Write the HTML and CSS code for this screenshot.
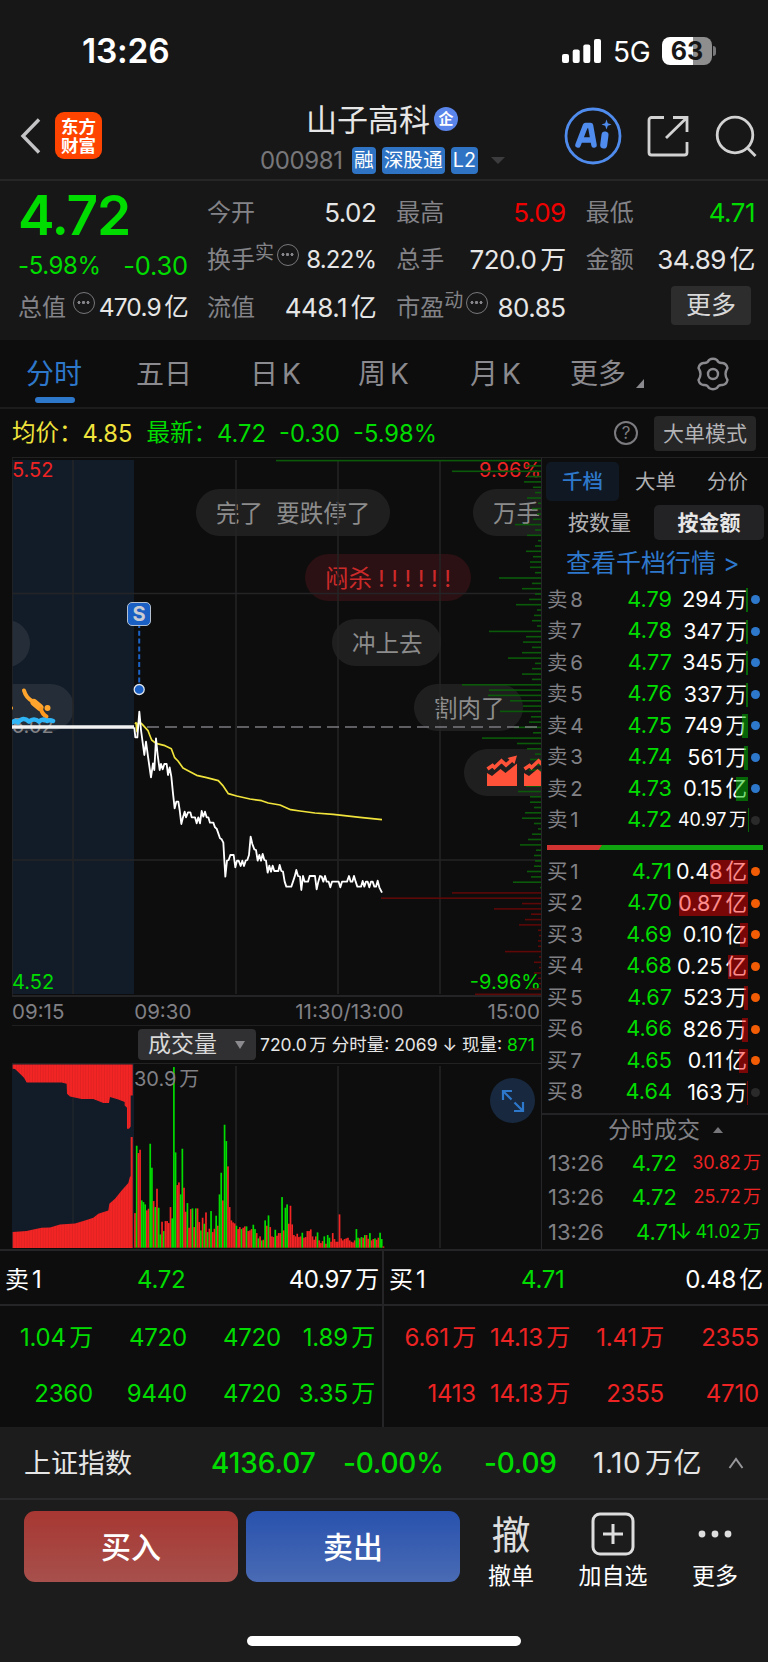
FILE: index.html
```html
<!DOCTYPE html>
<html lang="zh-CN">
<head>
    <meta charset="UTF-8">
    <meta name="viewport" content="width=device-width, initial-scale=1.0">
    <title>山子高科 000981</title>
    <link rel="stylesheet" href="styles.css">
</head>
<body>
    <div class="phone">

        <!-- Status bar -->
        <div class="status-bar">
            <span class="clock">13:26</span>
            <div class="status-right">
                <svg class="signal" width="39" height="25" viewBox="0 0 39 25" fill="#fff">
                    <rect x="0" y="15" width="7" height="9" rx="2"/>
                    <rect x="10.7" y="10.500" width="7" height="13.500" rx="2"/>
                    <rect x="21.300" y="5.500" width="7" height="18.500" rx="2"/>
                    <rect x="32" y="0" width="7" height="24" rx="2"/>
                </svg>
                <span class="network">5G</span>
                <span class="battery">63</span>
                <span class="battery-tip"></span>
            </div>
        </div>

        <!-- Header -->
        <header class="header">
            <div class="header-left">
                <svg width="21" height="36" viewBox="0 0 21 36" fill="none" stroke="#c4c4c6" stroke-width="3.4"><path d="M19 1.500 3 18l16 16.500"/></svg>
                <div class="logo">东方<br>财富</div>
            </div>
            <div class="header-title">
                <div class="stock-name">山子高科<span class="badge">企</span></div>
                <div class="stock-code">
                    <span class="code">000981</span>
                    <span class="tag">融</span>
                    <span class="tag">深股通</span>
                    <span class="tag">L2</span>
                    <span class="caret"></span>
                </div>
            </div>
            <div class="header-right">
                <svg width="58" height="58" viewBox="0 0 58 58">
                    <circle cx="29" cy="29" r="27" fill="none" stroke="#4f8cee" stroke-width="2.800"/>
                    <path d="M14 38 21.500 18.500h5L30 38M18 33h10" fill="none" stroke="#4f8cee" stroke-width="5.500" stroke-linejoin="round" stroke-linecap="round"/>
                    <path d="M41 28l-1.300 10" stroke="#4f8cee" stroke-width="7" stroke-linecap="round"/>
                    <path d="M42.500 12.500l1.300 3.700 3.700 1.300-3.700 1.300-1.300 3.700-1.300-3.700-3.700-1.300 3.700-1.300z" fill="#4f8cee"/>
                </svg>
                <svg class="share" width="42" height="42" viewBox="0 0 42 42" fill="none" stroke="#d2d2d2" stroke-width="2.800">
                    <path d="M17 2.500H4.500a2.500 2.500 0 0 0-2.500 2.500v32.500A2.500 2.500 0 0 0 4.500 40h33a2.500 2.500 0 0 0 2.500-2.500V27M26 2.500h14V17M40 2.500 19 23"/>
                </svg>
                <svg class="search" width="43" height="43" viewBox="0 0 43 43" fill="none" stroke="#d2d2d2" stroke-width="2.800">
                    <circle cx="20" cy="20" r="17.800"/><path d="M32.500 33 40.500 41"/>
                </svg>
            </div>
        </header>

        <!-- Quote panel -->
        <section class="quote">
            <div class="quote-main">
                <div class="last-price">4.72</div>
                <div class="change-row"><span>-5.98%</span><span class="change">-0.30</span></div>
                <div class="cell"><span>总值<i class="more-dots"></i></span><b class="n">470.9亿</b></div>
            </div>
            <div class="quote-grid">
                <div class="cell"><span>今开</span><b>5.02</b></div>
                <div class="cell"><span>最高</span><b class="up">5.09</b></div>
                <div class="cell"><span>最低</span><b class="down">4.71</b></div>
                <div class="cell"><span>换手<sup>实</sup><i class="more-dots"></i></span><b class="small">8.22%</b></div>
                <div class="cell"><span>总手</span><b class="n">720.0万</b></div>
                <div class="cell"><span>金额</span><b class="n">34.89亿</b></div>
                <div class="cell"><span>流值</span><b class="n">448.1亿</b></div>
                <div class="cell"><span>市盈<sup>动</sup><i class="more-dots"></i></span><b>80.85</b></div>
                <div class="cell cell-more"><button class="btn-more">更多</button></div>
            </div>
        </section>

        <!-- Period tabs -->
        <nav class="tabs">
            <a class="active">分时</a>
            <a>五日</a>
            <a class="n">日K</a>
            <a class="n">周K</a>
            <a class="n">月K</a>
            <a class="tab-more">更多</a>
            <svg width="34" height="36" viewBox="0 0 34 36" fill="none" stroke="#8a8a8f" stroke-width="2.400" stroke-linejoin="round">
                <path d="M13 4Q17 1.500 21 4Q22.500 7.500 26.500 7Q30.500 7.500 31.500 12Q29.500 15 29.500 18Q29.500 21 31.500 24Q30.500 28.500 26.500 29Q22.500 28.500 21 32Q17 34.500 13 32Q11.500 28.500 7.500 29Q3.500 28.500 2.500 24Q4.500 21 4.500 18Q4.500 15 2.500 12Q3.500 7.500 7.500 7Q11.500 7.500 13 4Z"/>
                <circle cx="17" cy="18" r="5"/>
            </svg>
        </nav>

        <div class="info-row">
            <span class="avg">均价：</span><span class="avg num-a">4.85</span>
            <span class="down">最新：</span><span class="down num-b">4.72</span>
            <span class="down num-c">-0.30</span>
            <span class="down num-d">-5.98%</span>
            <span class="help">?</span>
            <button class="btn-mode">大单模式</button>
        </div>

        <div class="main">
            <!-- Intraday chart -->
            <div class="chart-col">
                <div class="price-chart">
                    <span class="axis axis-top">5.52</span>
                    <span class="axis axis-mid">5.02</span>
                    <span class="axis axis-bottom">4.52</span>
                    <span class="axis axis-pct-top">9.96%</span>
                    <span class="axis axis-pct-bottom">-9.96%</span>

                    <span class="bubble b1">完了&nbsp; 要跌停了</span>
                    <span class="bubble b2">万手</span>
                    <span class="bubble b3 hot">闷杀<em>!!!!!!</em></span>
                    <span class="bubble b4">冲上去</span>
                    <span class="bubble b5">割肉了</span>
                    <span class="bubble b6"></span>
                    <span class="bubble b7"></span>
                    <span class="bubble b8"></span>

                    <svg class="price-svg" width="530" height="540" viewBox="0 0 530 540">
                        <g stroke="#242426" stroke-width="1.500">
                            <path d="M0 0V538M61 2V536M224 2V536M326 2V536M428 2V536M0 135.500H529M0 402H529"/>
                            <path d="M0 538H529" stroke-width="2"/>
                        </g>
                        <g id="depth"></g>
                        <!-- chart-up icons -->
                        <g fill="#ff5238">
                            <path d="M475 328V315l5 3 8.500-7 5 4 11.500-9.500V328z"/>
                            <path d="M475.500 311l5-3.500 2 2 7-6.500 4.500 4 7-6" fill="none" stroke="#ff5238" stroke-width="3.600"/>
                            <path d="M495.500 300l9.500-2.500-2.500 8.500z"/>
                            <path d="M512 328V315l5 3 8.500-7 5 4 11.500-9.500V328z"/>
                            <path d="M512.500 311l5-3.500 2 2 7-6.500 4.500 4 7-6" fill="none" stroke="#ff5238" stroke-width="3.600"/>
                        </g>
                        <path d="M129 269H529" stroke="#7b7b80" stroke-width="1.600" stroke-dasharray="12 6" stroke-dashoffset="-6"/>
                        <path d="M0 269H122" stroke="#f2f2f2" stroke-width="3.600"/>
                        <!-- diver -->
                        <g fill="none" stroke-linecap="round" stroke-linejoin="round">
                            <path d="M12 232.500q2 7.500 9 11" stroke="#ffa52e" stroke-width="4"/>
                            <path d="M22 244.500l6 5" stroke="#ffa52e" stroke-width="7"/>
                            <path d="M29 251q1 5 5.500 7.500" stroke="#ff9a1f" stroke-width="4"/>
                            <circle cx="35.500" cy="250" r="3" fill="#ffa52e"/>
                            <circle cx="-1" cy="250" r="2" fill="#ffa52e"/>
                            <path d="M0 264.500q3-3 6 0 5-6.500 11-1 5-4 10 0 4-3.500 8-.5 3-1.500 6 0" stroke="#2fb4f5" stroke-width="4.500"/>
                        </g>
                        <!-- sell marker -->
                        <path d="M127.200 165V226" stroke="#1c63c8" stroke-width="2" stroke-dasharray="5 2.800"/>
                        <circle cx="127.200" cy="231.500" r="5" fill="#1a5fc4" stroke="#dfe6ee" stroke-width="1.300"/>
                        <g transform="translate(-12 222) scale(.33333)" fill="none" stroke-linejoin="round">
                            <polyline stroke="#f0e33c" stroke-width="5" points="405,132 408,128 411,155 414,130 424,130 433,140 444,152 449,165 455,180 468,190 495,197 514,206 524,233 534,243 549,264 570,275 590,286 620,293 655,302 668,316 685,341 710,348 750,357 785,362 805,369 840,375 872,389 900,393 945,399 1000,403 1080,412 1146,419"/>
                            <polyline stroke="#fff" stroke-width="5.500" points="403,142 406,172 412,172 418,95 423,150 433,225 438,185 444,230 453,292 459,250 463,270 468,175 473,225 479,270 483,252 488,268 493,252 500,252 504,285 509,262 514,290 519,340 524,385 529,365 535,365 539,390 544,432 549,412 554,395 558,412 564,397 571,397 575,412 585,412 590,430 595,412 600,430 605,393 610,410 615,395 620,412 625,412 630,428 640,428 645,442 650,446 655,460 660,475 665,478 670,488 673,540 676,590 681,542 686,540 691,525 701,525 706,562 711,542 716,542 722,558 727,542 732,558 737,542 742,540 747,525 752,470 757,492 763,508 768,510 773,542 778,525 783,542 788,522 793,540 798,542 803,578 808,557 813,575 818,557 823,573 835,573 839,555 844,573 849,575 854,605 859,620 874,620 879,605 884,590 889,570 894,588 900,590 904,630 909,588 914,605 924,605 929,588 945,588 950,628 955,605 960,588 965,590 970,605 975,588 980,605 986,605 991,622 996,605 1016,605 1021,622 1026,605 1041,605 1047,588 1052,605 1057,605 1062,588 1067,605 1072,620 1083,620 1088,603 1093,620 1098,605 1103,605 1108,622 1113,605 1118,605 1123,620 1128,620 1133,602 1138,622 1146,638"/>
                        </g>
                    </svg>
                    <span class="sell-mark">S</span>
                </div>
                <div class="time-axis">
                    <span>09:15</span><span class="t2">09:30</span><span class="t3">11:30/13:00</span><span>15:00</span>
                </div>
                <div class="vol-head">
                    <button class="vol-select">成交量<i></i></button>
                    <span class="vol-text n">720.0万 分时量: 2069 ↓ 现量: <b class="down">871</b></span>
                </div>
                <div class="vol-chart">
                    <svg width="530" height="185" viewBox="0 0 530 185">
                        <defs>
                            <pattern id="stripe" width="8" height="30" patternUnits="userSpaceOnUse">
                                <rect width="8" height="30" fill="#f32424"/>
                                <rect width="1.500" height="30" fill="#d22020"/>
                            </pattern>
                        </defs>
                        <path d="M0 0V184M224 2V184M326 2V184M428 2V184" stroke="#242426" stroke-width="1.500"/>
                        <rect x="0" y="0" width="122" height="184" fill="#121c28"/>
                        <path d="M61 2V184" stroke="#20252a" stroke-width="1.500"/>
                        <g transform="translate(-12 -73.600) scale(.33333)">
                            <path fill="url(#stripe)" d="M38 222H398V315H392V408L387 415H381V352L374 345V335L355 327L330 320L327 338H310L280 326H245L210 318L201 310L200 280L185 276H140L80 276L72 262L60 250L45 236L38 235Z"/>
                            <path fill="url(#stripe)" d="M38 725L80 722L100 717L125 712L150 711L180 702L225 699L255 690L280 682L295 670L325 660L328 640L345 625L365 600L385 578L390 558H392V440H398V773H38Z"/>
                            <g id="volume"></g>
                        </g>
                    </svg>
                    <span class="vol-max n">30.9万</span>
                    <span class="expand">
                        <svg width="24" height="24" viewBox="0 0 24 24" fill="none" stroke="#2e78cc" stroke-width="2.200"><path d="M2 11V2h9M2.500 2.500l8 8M22 13v9h-9M21.500 21.500l-8-8"/></svg>
                    </span>
                </div>
            </div>

            <!-- Order book -->
            <aside class="book">
                <div class="book-tabs"><a class="active">千档</a><a>大单</a><a>分价</a></div>
                <div class="book-mode"><a>按数量</a><a class="active">按金额</a></div>
                <div class="book-link">查看千档行情 &gt;</div>
                <div class="levels" id="sells"></div>
                <div class="ratio"><i></i></div>
                <div class="levels" id="buys"></div>
                <div class="ticks-title">分时成交<i></i></div>
                <div class="ticks">
                    <div class="tick"><span>13:26</span><b>4.72</b><i></i><em class="up n">30.82万</em></div>
                    <div class="tick"><span>13:26</span><b>4.72</b><i></i><em class="up n">25.72万</em></div>
                    <div class="tick"><span>13:26</span><b>4.71</b><i>↓</i><em class="down n">41.02万</em></div>
                </div>
            </aside>
        </div>

        <!-- Level 2 queues -->
        <section class="queues">
            <div class="queue">
                <div class="queue-head"><span class="n">卖1</span><b>4.72</b><span class="n">40.97万</span></div>
                <div class="queue-grid down">
                    <span class="n">1.04万</span><span>4720</span><span>4720</span><span class="n">1.89万</span>
                    <span>2360</span><span>9440</span><span>4720</span><span class="n">3.35万</span>
                </div>
            </div>
            <div class="queue">
                <div class="queue-head"><span class="n">买1</span><b>4.71</b><span class="n">0.48亿</span></div>
                <div class="queue-grid up">
                    <span class="n">6.61万</span><span class="n">14.13万</span><span class="n">1.41万</span><span>2355</span>
                    <span>1413</span><span class="n">14.13万</span><span>2355</span><span>4710</span>
                </div>
            </div>
        </section>

        <!-- Index strip -->
        <div class="index-bar">
            <span class="index-name">上证指数</span>
            <b class="i1">4136.07</b><b class="i2">-0.00%</b><b class="i3">-0.09</b>
            <span class="index-amount n">1.10万亿</span>
            <svg width="16" height="14" viewBox="0 0 16 14" fill="none" stroke="#98989c" stroke-width="2"><path d="M1.500 12 8 3l6.500 9"/></svg>
        </div>

        <!-- Bottom actions -->
        <footer class="footer">
            <button class="trade buy">买入</button>
            <button class="trade sell">卖出</button>
            <div class="action"><span class="glyph">撤</span>撤单</div>
            <div class="action wide">
                <svg width="44" height="44" viewBox="0 0 44 44" fill="none" stroke="#dedede" stroke-width="3"><rect x="2" y="2" width="40" height="40" rx="7"/><path d="M22 12v20M12 22h20"/></svg>
                加自选
            </div>
            <div class="action">
                <svg width="44" height="44" viewBox="0 0 44 44" fill="#dedede"><circle cx="9" cy="22" r="3.400"/><circle cx="22" cy="22" r="3.400"/><circle cx="35" cy="22" r="3.400"/></svg>
                更多
            </div>
        </footer>
        <div class="home"></div>
    </div>

    <script>
        // level, price, amount, bar width, dot
        const sells = [
            [8, "4.79", "294万", 2, "blue"], [7, "4.78", "347万", 2, "blue"],
            [6, "4.77", "345万", 2, "blue"], [5, "4.76", "337万", 2, "blue"],
            [4, "4.75", "749万", 6, "blue"], [3, "4.74", "561万", 4, "blue"],
            [2, "4.73", "0.15亿", 12, "blue"], [1, "4.72", "40.97万", 0.5, "off"]
        ];
        const buys = [
            [1, "4.71", "0.48亿", 38.5, "orange"], [2, "4.70", "0.87亿", 69, "orange"],
            [3, "4.69", "0.10亿", 8, "orange"], [4, "4.68", "0.25亿", 20, "orange"],
            [5, "4.67", "523万", 4, "orange"], [6, "4.66", "826万", 6, "orange"],
            [7, "4.65", "0.11亿", 9, "orange"], [8, "4.64", "163万", 1, "off"]
        ];

        function drawLevels(id, label, rows) {
            document.getElementById(id).innerHTML = rows.map(r => `
                <div class="level">
                    <span class="n">${label}${r[0]}</span>
                    <b>${r[1]}</b>
                    <em class="n ${r[2].length > 5 ? "long" : ""}">${r[2]}<i style="width:${r[3]}px"></i></em>
                    <u class="${r[4]}"></u>
                </div>`).join("");
        }
        drawLevels("sells", "卖", sells);
        drawLevels("buys", "买", buys);

        // resting orders by price, drawn from the right edge
        const asks = [265, 15, 89, 14, 17, 8, 6, 14, 3, 9, 4, 8, 26, 6, 14, 3, 6, 15, 8, 11, 11, 6, 42, 9, 19, 6, 12, 25, 4, 7, 9, 4, 52, 15, 18, 9, 19, 33, 6, 9, 19, 9, 79, 52, 53, 31, 18, 41, 10, 12, 27, 8, 59, 24, 14,
            6, 11, 9, 12, 8, 8, 15, 23, 11, 11, 7, 16, 19, 7, 3, 9, 13, 21, 5, 7, 6, 7, 14, 10, 28, 1];
        const bids = [89, 160, 19, 47, 10, 16, 22, 3, 2, 3, 3, 36, 2, 7, 2, 7, 3, 2, 12, 66];
        let depth = "";
        asks.concat(bids).forEach((w, i) => {
            const color = i < asks.length ? "#0a5a0a" : "#5e0808";
            depth += `<rect x="${529 - w}" y="${(1.8 + i * 5.337).toFixed(1)}" width="${w}" height="1.6" fill="${color}"/>`;
        });
        document.getElementById("depth").innerHTML = depth;

        // minute volume, g = falling, r = rising
        const volume = "r104 g306 r284 r294 g142 g137 g130 r112 r117 g312 g240 r140 g122 r177 g120 g40 r78 g50 r80 r80 r74 r122 g88 g542 g286 r188 r196 g160 g297 r180 r108 g134 r60 r116 g118 r62 g118 r118 r77 g52 r90 g72 r106 g47 r57 g110 r47 r57 g96 r66 g160 g225 r142 g369 g320 r244 r122 r82 r76 r73 g66 r56 r62 g56 r60 r64 g64 r50 r52 r56 g69 g56 r44 g28 r34 g22 r24 g82 r66 g97 r62 r34 r32 g54 r36 r44 r44 g152 r52 g120 g130 r72 r126 r70 r38 r34 r42 r32 r34 g45 r30 r32 r50 r50 r55 r34 r24 r34 g46 r22 r14 r20 g34 r12 g38 g30 r18 r44 r26 r18 r18 r100 r28 r22 r26 r28 r30 r22 r18 r16 r22 g56 g30 r28 g32 r30 g38 r38 r27 g44 r22 r26 g28 r24 r30 g45 g26 r4";
        document.getElementById("volume").innerHTML = volume.split(" ").map((v, i) => {
            const h = Number(v.slice(1));
            return `<rect x="${(402.5 + i * 5.07).toFixed(1)}" y="${772 - h}" width="5.1" height="${h}" fill="${v[0] === "g" ? "#00dc00" : "#f32424"}"/>`;
        }).join("");

        // small gap between digits and Chinese characters
        document.querySelectorAll(".n").forEach(el => {
            el.innerHTML = el.innerHTML
                .replace(/(\d)([万亿])/g, '$1<span class="gap">$2</span>')
                .replace(/([卖买日周月])([\dK])/g, '$1<span class="gap">$2</span>');
        });
    </script>
</body>
</html>
```
FILE: styles.css
```css
* {
    box-sizing: border-box;
}
body {
    margin: 0;
    background: #fff;
    font-family: Inter, "Noto Sans CJK SC", sans-serif;
    font-size: 24px;
    line-height: 1;
    color: #e6e6e6;
}
b, em, i, u {
    font-weight: 400;
    font-style: normal;
    text-decoration: none;
}
button {
    font-family: inherit;
    line-height: 1;
    border: none;
    padding: 0;
    color: #d8d8d8;
}
svg {
    display: block;
    flex: none;
}
.phone {
    width: 768px;
    height: 1662px;
    background: #0d0d0d;
    overflow: hidden;
    white-space: nowrap;
}
.gap {
    margin-left: .14em;
}
.up {
    color: #ee2323;
}
.down {
    color: #00dc00;
}

/* status bar */
.status-bar {
    height: 100px;
    padding: 2px 52px 0 82px;
    display: flex;
    align-items: center;
    justify-content: space-between;
    background: #171717;
    color: #fff;
}
.clock {
    font-size: 33.500px;
    font-weight: 600;
    letter-spacing: -0.2px;
    padding-top: 2px;
}
.status-right {
    display: flex;
    align-items: center;
}
.network {
    font-size: 28px;
    margin-left: 12px;
    width: 49px;
    letter-spacing: -0.3px;
    padding-top: 2px;
}
.battery {
    width: 50px;
    height: 28px;
    border-radius: 8px;
    background: linear-gradient(to right, #fff 63%, #8e8e8e 63%);
    color: #171717;
    font-size: 25px;
    font-weight: 700;
    line-height: 28px;
    text-align: center;
}
.battery-tip {
    width: 3px;
    height: 10px;
    margin-left: 1px;
    border-radius: 0 3px 3px 0;
    background: #77777a;
}

/* header */
.header {
    height: 81px;
    display: grid;
    grid-template-columns: 260px 1fr 204px;
    background: #171717;
    border-bottom: 2px solid #262626;
}
.header-left {
    display: flex;
    align-items: center;
    height: 71px;
    padding-left: 20px;
}
.logo {
    width: 47px;
    height: 47px;
    margin-left: 14px;
    border-radius: 9px;
    background: #ff4400;
    color: #fff;
    font-size: 17.500px;
    font-weight: 700;
    line-height: 19px;
    padding-top: 5px;
    text-align: center;
}
.stock-name {
    height: 38px;
    padding-left: 46px;
    font-size: 31px;
    display: flex;
    align-items: center;
}
.badge {
    width: 24px;
    height: 24px;
    border-radius: 50%;
    background: #5a85ea;
    color: #fff;
    font-size: 15px;
    font-weight: 700;
    line-height: 23px;
    text-align: center;
    margin-left: 4px;
}
.stock-code {
    height: 45px;
    display: flex;
    align-items: center;
    gap: 6px;
}
.code {
    color: #77777b;
    font-size: 24px;
    width: 86px;
    letter-spacing: -0.4px;
}
.tag {
    height: 27px;
    padding: 0 2px;
    border-radius: 4px;
    background: #2f74c4;
    color: #fff;
    font-size: 19.700px;
    line-height: 26px;
}
.caret {
    margin-left: 7px;
    border: 7px solid transparent;
    border-top-color: #3c3c3e;
    border-bottom: none;
}
.header-right {
    display: flex;
    align-items: center;
    height: 72px;
}
.share {
    margin-left: 25px;
}
.search {
    margin-left: 26px;
}

/* quote panel */
.quote {
    height: 159px;
    display: flex;
    padding: 8px 13px 0 18px;
    background: #171717;
}
.quote-main {
    width: 170px;
    color: #00dc00;
}
.last-price {
    height: 52px;
    padding-top: 1px;
    font-size: 55px;
    font-weight: 600;
    line-height: 50px;
    letter-spacing: -1.300px;
}
.change-row {
    display: flex;
    justify-content: space-between;
    align-items: center;
    height: 43px;
    font-size: 24px;
    letter-spacing: -0.4px;
    padding-top: 6px;
}
.change {
    font-size: 25.500px;
    letter-spacing: -0.2px;
}
.quote-grid {
    flex: 1;
    margin-left: 19px;
    display: grid;
    grid-template-columns: repeat(3, 1fr);
    grid-template-rows: repeat(3, 47.500px);
    column-gap: 20px;
}
.cell {
    display: flex;
    align-items: center;
    justify-content: space-between;
    height: 47.500px;
    color: #838388;
}
.cell > span {
    display: flex;
    align-items: center;
}
.cell b {
    color: #e6e6e6;
    font-size: 26px;
    letter-spacing: -0.5px;
}
.cell b.small {
    font-size: 24px;
    letter-spacing: -0.8px;
}
.cell b.up {
    color: #f00000;
}
.cell b.down {
    color: #00dc00;
}
.cell sup {
    font-size: 19px;
    line-height: 1;
    align-self: flex-start;
    margin-top: -5px;
}
.more-dots {
    width: 22px;
    height: 22px;
    margin: -10px 0 0 3px;
    border: 1.500px solid #77777b;
    border-radius: 50%;
    background:
        radial-gradient(circle at 5px 9.500px, #85858a 1.300px, transparent 1.800px),
        radial-gradient(circle at 9.500px 9.500px, #85858a 1.300px, transparent 1.800px),
        radial-gradient(circle at 14px 9.500px, #85858a 1.300px, transparent 1.800px);
}
.quote-main .cell {
    height: 47px;
}
.quote-main .more-dots {
    margin-left: 7px;
}
.quote-main .cell b {
    font-size: 24.500px;
    letter-spacing: -0.8px;
}
.cell-more {
    justify-content: flex-end;
}
.btn-more {
    width: 80px;
    height: 39px;
    margin: -4px 4px 0 0;
    border-radius: 4px;
    background: #2d2d2e;
    font-size: 25px;
}

/* period tabs */
.tabs {
    height: 69px;
    display: flex;
    align-items: center;
    padding-left: 26px;
    border-bottom: 2px solid #1c1c1c;
    color: #8a8a8f;
    font-size: 28px;
}
.tabs a {
    width: 110px;
    height: 67px;
    line-height: 68px;
}
.tabs .active {
    color: #2e78cc;
    position: relative;
}
.tabs .active::after {
    content: "";
    position: absolute;
    left: 9px;
    bottom: 4px;
    width: 40px;
    height: 6px;
    border-radius: 3px;
    background: #2e78cc;
}
.tabs a:nth-child(2) {
    width: 114px;
}
.tabs a:nth-child(3) {
    width: 108px;
}
.tabs a:nth-child(4) {
    width: 112px;
}
.tabs a:nth-child(5) {
    width: 100px;
}
.tabs .tab-more {
    width: 126px;
    display: flex;
}
.tab-more::after {
    content: "";
    width: 8px;
    height: 9px;
    margin: 39px 0 0 10px;
    background: #8a8a8f;
    clip-path: polygon(100% 0, 100% 100%, 0 100%);
}

.info-row {
    height: 48px;
    display: flex;
    align-items: center;
    padding: 0 12px;
    font-size: 23.500px;
}
.avg {
    color: #f0e33c;
}
.num-a {
    width: 64px;
}
.num-b {
    width: 62px;
}
.num-c {
    width: 74px;
}
.num-a, .num-b, .num-c, .num-d {
    font-size: 23.700px;
    padding-top: 1px;
}
.help {
    width: 24px;
    height: 24px;
    margin-left: auto;
    border: 2px solid #7c7c80;
    border-radius: 50%;
    color: #7c7c80;
    font-size: 17px;
    line-height: 20px;
    text-align: center;
}
.btn-mode {
    width: 102px;
    height: 35px;
    margin-left: 16px;
    border-radius: 4px;
    background: #262627;
    color: #b4b4b6;
    font-size: 21px;
}

/* chart and order book */
.main {
    display: flex;
    height: 794px;
    padding-left: 12px;
    border-bottom: 2px solid #252527;
}
.chart-col {
    flex: none;
    width: 530px;
    border-top: 1px solid #222;
    border-right: 1px solid #262628;
}
.price-chart {
    position: relative;
    height: 540px;
    overflow: hidden;
    background: linear-gradient(#121c28, #121c28) 0 2px / 122px 534px no-repeat;
}
.price-svg {
    position: absolute;
    left: 0;
    top: 0;
}
.axis {
    position: absolute;
    font-size: 20px;
    color: #808085;
}
.axis-top {
    left: 0;
    top: 2px;
    color: #ee2323;
}
.axis-mid {
    left: 0;
    top: 258px;
}
.axis-bottom {
    left: 0;
    top: 514px;
    color: #00dc00;
}
.axis-pct-top {
    right: 0;
    top: 2px;
    color: #ee2323;
}
.axis-pct-bottom {
    right: 0;
    top: 514px;
    color: #00dc00;
}
.bubble {
    position: absolute;
    height: 47px;
    border-radius: 24px;
    background: rgba(255, 255, 255, 0.08);
    color: #8c8c8c;
    font-size: 23.500px;
    line-height: 49px;
    padding-left: 20px;
}
.b1 {
    left: 184px;
    top: 31px;
    width: 194px;
}
.b2 {
    left: 461px;
    top: 31px;
    width: 120px;
}
.b3 {
    left: 293px;
    top: 96px;
    width: 166px;
}
.b4 {
    left: 320px;
    top: 161px;
    width: 109px;
}
.b5 {
    left: 402px;
    top: 226px;
    width: 109px;
}
.b6 {
    left: -60px;
    top: 162px;
    width: 78px;
}
.b7 {
    left: -60px;
    top: 226px;
    width: 122px;
}
.b8 {
    left: 452px;
    top: 291px;
    width: 140px;
}
.hot {
    background: #2b1113;
    color: #cc2a2a;
}
.hot em {
    letter-spacing: 6.500px;
    margin-left: 6px;
}
.sell-mark {
    position: absolute;
    left: 115px;
    top: 144px;
    width: 24px;
    height: 24px;
    border: 1.500px solid #b4c0d0;
    border-radius: 5px;
    background: #1a5fc4;
    color: #c8ccd2;
    font-size: 20px;
    font-weight: 700;
    line-height: 22px;
    text-align: center;
}
.time-axis {
    height: 28px;
    display: flex;
    align-items: center;
    justify-content: space-between;
    border-bottom: 1px solid #1f1f21;
    color: #808085;
    font-size: 20.500px;
    padding: 1px 1px 0 0;
}
.time-axis .t2 {
    margin-right: 34px;
}
.time-axis .t3 {
    margin-right: 14px;
}
.vol-head {
    height: 38px;
    display: flex;
    align-items: center;
    padding-left: 126px;
    border-bottom: 1px solid #222;
}
.vol-select {
    width: 118px;
    height: 31px;
    padding-left: 10px;
    display: flex;
    align-items: center;
    border-radius: 4px;
    background: #303032;
    font-size: 23px;
}
.vol-select i {
    margin-left: 18px;
    border: 5px solid transparent;
    border-top: 8px solid #8a8a8f;
    border-bottom: none;
}
.vol-text {
    margin-left: 4px;
    font-size: 17.500px;
}
.vol-chart {
    position: relative;
    height: 185px;
}
.vol-max {
    position: absolute;
    left: 122px;
    top: 5px;
    font-size: 20px;
    color: #808085;
}
.expand {
    position: absolute;
    left: 478px;
    top: 14px;
    width: 45px;
    height: 45px;
    border-radius: 50%;
    background: #18293f;
    display: flex;
    align-items: center;
    justify-content: center;
}

.book {
    flex: 1;
    min-width: 0;
    border-top: 1px solid #222;
}
.book-tabs {
    height: 43px;
    padding: 4px 0 0 4px;
    display: flex;
    font-size: 20.500px;
    color: #b0b0b3;
}
.book-tabs a {
    width: 73px;
    height: 39px;
    line-height: 40px;
    text-align: center;
}
.book-tabs a:nth-child(2) {
    margin-right: -1px;
}
.book-tabs .active {
    border-radius: 5px;
    background: #101923;
    color: #2e78cc;
    font-weight: 500;
}
.book-mode {
    display: flex;
    justify-content: space-between;
    height: 39px;
    padding: 4px 4px 0 26px;
    font-size: 21px;
    line-height: 36px;
    color: #b0b0b3;
}
.book-mode .active {
    width: 110px;
    height: 35px;
    border-radius: 5px;
    background: #232326;
    color: #e6e6e6;
    font-weight: 700;
    text-align: center;
}
.book-link {
    height: 44px;
    padding-left: 24px;
    font-size: 25px;
    line-height: 47px;
    color: #2e78cc;
}
.level {
    height: 31.500px;
    display: grid;
    grid-template-columns: 54px 76px 70px 13px;
    align-items: center;
    padding-left: 5px;
}
.level > span {
    font-size: 20.500px;
    color: #808085;
}
.level b {
    font-size: 21.700px;
    color: #00dc00;
    text-align: right;
    padding-right: 5px;
}
.level em {
    position: relative;
    font-size: 21.500px;
    color: #fff;
    justify-self: end;
}
.level em.long {
    font-size: 18px;
}
.level em i {
    position: absolute;
    right: -1px;
    top: -1px;
    height: 24px;
    background: rgba(0, 190, 0, 0.5);
}
.level em.long i {
    top: -3px;
}
#buys .level em i {
    background: rgba(255, 0, 0, 0.45);
}
.level u {
    width: 9px;
    height: 9px;
    border-radius: 50%;
    justify-self: end;
}
.blue {
    background: #2e78cc;
}
.orange {
    background: #f25c05;
}
.off {
    background: #2a2a2b;
}
.ratio {
    height: 5px;
    margin: 9px 5px 6px;
    background: #0fa30f;
}
.ratio i {
    display: block;
    width: 55px;
    height: 5px;
    background: #d13333;
    clip-path: polygon(0 0, 100% 0, 94% 100%, 0 100%);
}
.ticks-title {
    height: 32px;
    margin-top: 5px;
    padding-left: 66px;
    border-top: 2px solid #232325;
    display: flex;
    align-items: center;
    font-size: 23px;
    color: #808085;
}
.ticks-title i {
    margin-left: 13px;
    border: 5px solid transparent;
    border-top: none;
    border-bottom: 6px solid #77777b;
}
.tick {
    height: 34.500px;
    display: grid;
    grid-template-columns: 62px 67px 13px 71px;
    align-items: center;
    padding: 1px 0 0 6px;
    font-size: 22px;
    color: #808085;
}
.tick b {
    color: #00dc00;
    text-align: right;
}
.tick i {
    color: #00dc00;
    justify-self: center;
    font-size: 21px;
}
.tick em {
    font-size: 18px;
    letter-spacing: -0.1px;
    justify-self: end;
}

/* level 2 queues */
.queues {
    display: grid;
    grid-template-columns: 382px 386px;
    height: 176px;
    font-size: 24px;
}
.queue + .queue {
    border-left: 2px solid #252527;
}
.queue-head {
    height: 55px;
    display: grid;
    grid-template-columns: 132px 1fr auto;
    align-items: center;
    padding: 5px 5px 0;
    border-bottom: 2px solid #252527;
    color: #fff;
    letter-spacing: -0.3px;
}
.queue-head b {
    color: #00dc00;
}
.queue:first-child .queue-head {
    padding-right: 3px;
}
.queue-grid {
    display: grid;
    grid-template-columns: 93px repeat(3, 94px);
    grid-auto-rows: 56px;
    align-items: center;
    padding-top: 4px;
    text-align: right;
    letter-spacing: -0.2px;
}
.queue-grid.up {
    grid-template-columns: 92px 94px 94px 95px;
}

/* index strip */
.index-bar {
    height: 73px;
    display: flex;
    align-items: center;
    padding: 1px 0 0 24px;
    background: #1c1c1c;
    border-bottom: 2px solid #2a2a2c;
    font-size: 28px;
}
.index-name {
    width: 187px;
    font-size: 27px;
}
.index-bar b {
    color: #00dc00;
    font-weight: 500;
}
.i1 {
    width: 132px;
}
.i2 {
    width: 141px;
    letter-spacing: -0.2px;
}
.i3 {
    width: 109px;
    letter-spacing: -0.2px;
}
.index-amount {
    width: 135px;
    letter-spacing: 0.5px;
}

/* bottom actions */
.footer {
    height: 136px;
    display: flex;
    padding: 11px 0 0 24px;
    background: #1c1c1c;
}
.trade {
    flex: none;
    width: 214px;
    height: 71px;
    margin-right: 8px;
    border-radius: 11px;
    color: #fff;
    font-size: 30px;
    font-weight: 500;
}
.buy {
    background: linear-gradient(#a73732, #a7504c);
}
.sell {
    background: linear-gradient(#2852ae, #4a6bb4);
}
.action {
    display: flex;
    flex-direction: column;
    align-items: center;
    gap: 9px;
    width: 86px;
    padding-top: 1px;
    font-size: 23px;
    color: #fff;
}
.action.wide {
    width: 118px;
}
.glyph {
    height: 44px;
    font-size: 39px;
    line-height: 45px;
    color: #dedede;
}
.home {
    height: 26px;
    background: #1c1c1c;
}
.home::before {
    content: "";
    display: block;
    width: 274px;
    height: 10px;
    margin: 0 auto;
    border-radius: 5px;
    background: #fff;
}
```
